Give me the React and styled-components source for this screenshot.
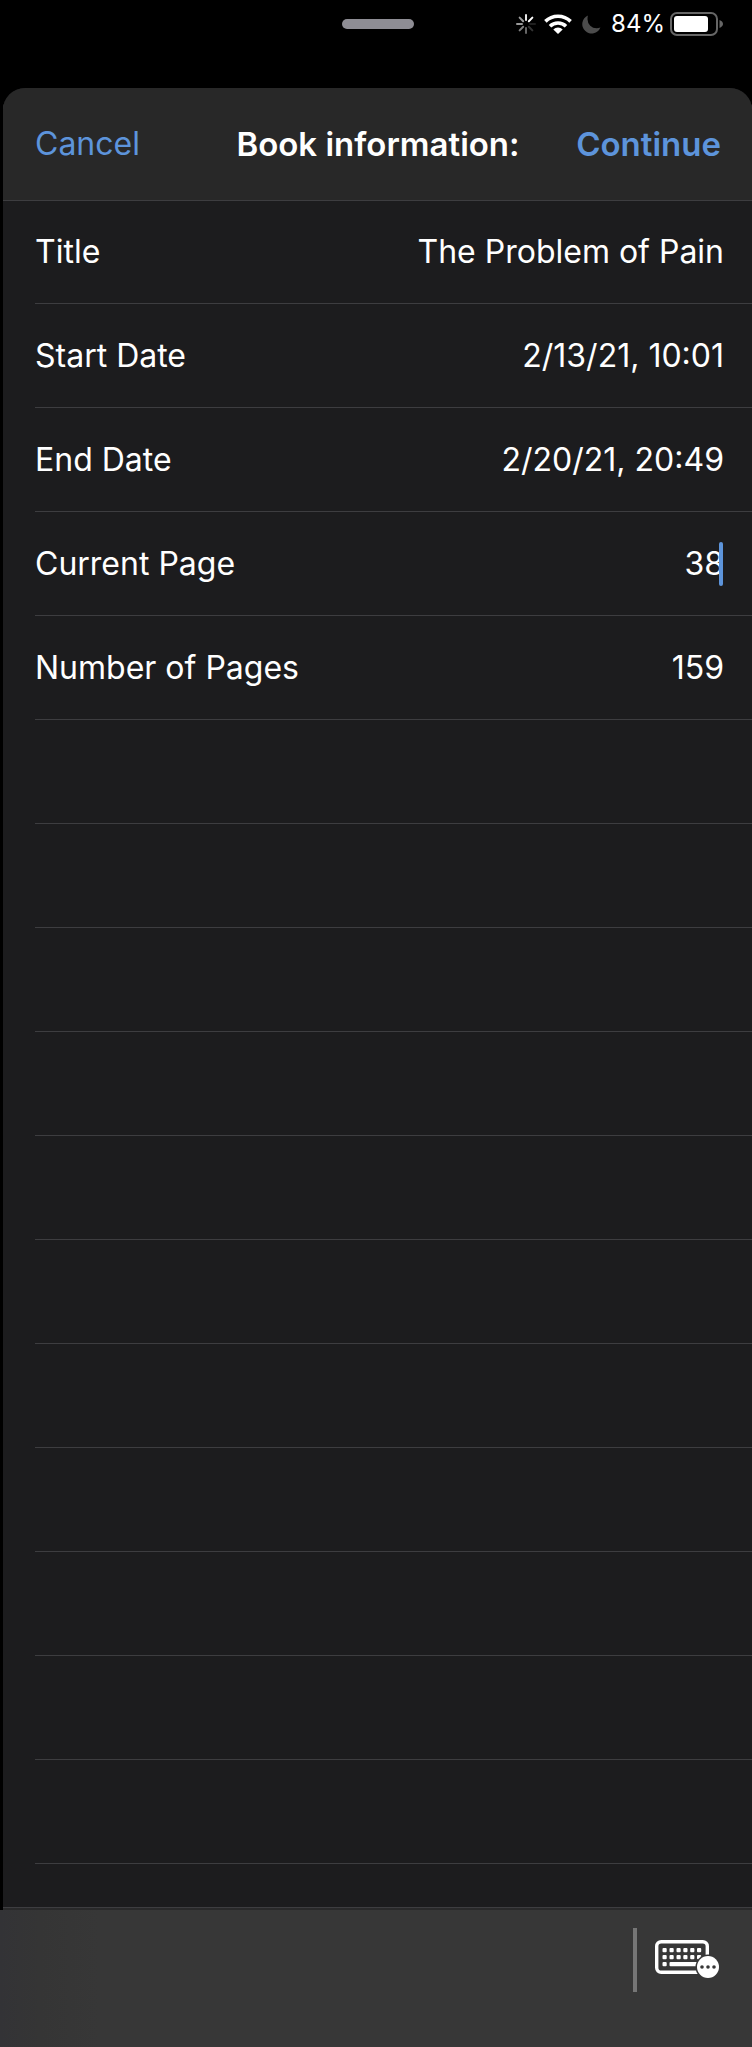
import React, { useState } from "react";
import styled, { createGlobalStyle } from "styled-components";

const GlobalStyle = createGlobalStyle`
  *, *::before, *::after { box-sizing: border-box; }
  body {
    margin: 0;
    background: #000;
    color: #fff;
    font-family: Inter, "Liberation Sans", sans-serif;
  }
  button, input { font: inherit; }
`;

const Screen = styled.div`
  display: flex;
  flex-direction: column;
  min-height: 100vh;
`;

const StatusBar = styled.div`
  display: grid;
  grid-template-columns: 1fr auto 1fr;
  align-items: center;
  height: 48px;
  margin-bottom: 40px;
  padding-left: 4px;
`;

const GrabHandle = styled.div`
  grid-column: 2;
  width: 72px;
  height: 10px;
  border-radius: 5px;
  background: #8e8d94;
`;

const Indicators = styled.div`
  display: flex;
  align-items: center;
  justify-content: flex-end;
  padding-right: 28px;

  svg { display: block; flex: none; }
`;

const Gap = styled.span`
  flex: none;
  width: ${({ $size }) => $size}px;
`;

const BatteryLevel = styled.span`
  font-size: 24px;
  line-height: 28px;
`;

const Sheet = styled.form`
  flex: 1;
  display: flex;
  flex-direction: column;
  margin: 0 0 0 3px;
  border-radius: 22px 22px 0 0;
  background: #1c1c1e;
  overflow: hidden;
`;

const Header = styled.header`
  display: grid;
  grid-template-columns: 1fr auto 1fr;
  align-items: center;
  height: 112px;
  padding: 0 31px 0 32px;
  background: #282828;
  box-shadow: 0 1px 0 #3d3d40;
`;

const Heading = styled.h1`
  margin: 0;
  font-size: 33px;
  font-weight: 600;
  line-height: 40px;
`;

const HeaderButton = styled.button`
  justify-self: ${({ $end }) => ($end ? "end" : "start")};
  padding: 0;
  border: 0;
  background: none;
  color: #5d94db;
  font-size: ${({ $end }) => ($end ? 33 : 32)}px;
  font-weight: ${({ $end }) => ($end ? 600 : 400)};
  line-height: 40px;
`;

const Rows = styled.div`
  flex: 1;
  display: flex;
  flex-direction: column;
  padding-left: 32px;
`;

const Row = styled.div`
  display: flex;
  align-items: center;
  height: 104px;
  padding-right: 28px;
  border-bottom: 1px solid #3d3d40;
`;

const PartialRow = styled.div`
  flex: 1;
  min-height: 43px;
`;

const Label = styled.label`
  flex: none;
  font-size: 32px;
  line-height: 40px;
`;

const Field = styled.div`
  position: relative;
  flex: 1;
  min-width: 0;
`;

const Input = styled.input`
  display: block;
  width: 100%;
  height: 44px;
  padding: 0;
  border: 0;
  outline: 0;
  background: none;
  color: #fff;
  caret-color: transparent;
  font-size: 32px;
  text-align: right;
`;

const Caret = styled.span`
  position: absolute;
  top: 0;
  right: 1px;
  width: 4px;
  height: 44px;
  border-radius: 2px;
  background: #5d94db;
`;

const SheetEdge = styled.div`
  height: 3px;
  border-top: 1px solid #3d3d40;
  background: #29292a;
`;

const KeyboardBar = styled.div`
  display: flex;
  align-items: flex-start;
  justify-content: flex-end;
  gap: 18px;
  height: 137px;
  padding: 18px 33px 0 0;
  background: linear-gradient(90deg, #333336 0, #353535 40px, #373737 100px);
`;

const Divider = styled.span`
  width: 4px;
  height: 64px;
  background: #767676;
`;

const KeyboardButton = styled.button`
  display: flex;
  padding: 12px 0;
  border: 0;
  background: none;
`;

const spokes = [
  [0, 0.9], [45, 1], [90, 0.12], [135, 0.2],
  [180, 0.4], [225, 0.5], [270, 0.6], [315, 0.62],
];

function SpinnerIcon() {
  return (
    <svg width="20" height="20" viewBox="0 0 20 20" aria-hidden="true">
      {spokes.map(([angle, opacity]) => (
        <path
          key={angle}
          d="M10 1v5"
          stroke="#fff"
          strokeWidth="2"
          strokeLinecap="round"
          opacity={opacity}
          transform={`rotate(${angle} 10 10)`}
        />
      ))}
    </svg>
  );
}

function WifiIcon() {
  return (
    <svg width="28" height="20" viewBox="0 0 28 20" aria-hidden="true">
      <g fill="none" stroke="#fff" strokeWidth="3.6">
        <path d="M1.4 7.4a18 18 0 0 1 25.2 0" />
        <path d="M6 12.2a11.6 11.6 0 0 1 16 0" />
      </g>
      <path d="M14 20l-4.7-4.6a6.8 6.8 0 0 1 9.4 0z" fill="#fff" />
    </svg>
  );
}

function MoonIcon() {
  return (
    <svg width="19" height="19" viewBox="0 0 19 19" aria-hidden="true">
      <path
        d="M5.9 0.5A9.4 9.4 0 1 0 18.4 12.6C17.2 13.1 15.9 13.3 14.7 13.3A9.1 9.1 0 0 1 5.5 4.3C5.5 3 5.6 1.7 5.9 0.5z"
        fill="#4c4c4c"
      />
    </svg>
  );
}

function BatteryIcon() {
  return (
    <svg width="54" height="24" viewBox="0 0 54 24" aria-hidden="true">
      <rect x="1" y="1" width="46" height="22" rx="6" fill="none" stroke="#666" strokeWidth="2" />
      <rect x="4" y="4" width="34" height="16" rx="3" fill="#fff" />
      <path d="M49.5 8c2 .8 3.5 2.2 3.5 4s-1.5 3.2-3.5 4z" fill="#666" />
    </svg>
  );
}

const keyColumns = [7.5, 14.5, 21.5, 28.3, 35.2, 42];

function KeyboardIcon() {
  return (
    <svg width="64" height="38" viewBox="0 0 64 38" aria-hidden="true">
      <rect x="1.7" y="1.7" width="50.6" height="30.6" rx="4.5" fill="none" stroke="#fff" strokeWidth="3.4" />
      <g fill="#fff">
        {[8, 15].map((y) =>
          keyColumns.map((x) => (
            <rect key={`${x}-${y}`} x={x} y={y} width="4.2" height="4.2" rx="1" />
          ))
        )}
        <rect x="7.5" y="22" width="4.2" height="4.2" rx="1" />
        <rect x="14.5" y="22" width="28" height="4.2" rx="1" />
      </g>
      <circle cx="53" cy="27" r="12.5" fill="#373737" />
      <circle cx="53" cy="27" r="11" fill="#fff" />
      <g fill="#373737">
        <circle cx="47" cy="27" r="1.8" />
        <circle cx="53" cy="27" r="1.8" />
        <circle cx="59" cy="27" r="1.8" />
      </g>
    </svg>
  );
}

const fields = [
  { id: "title", label: "Title", value: "The Problem of Pain" },
  { id: "start", label: "Start Date", value: "2/13/21, 10:01" },
  { id: "end", label: "End Date", value: "2/20/21, 20:49" },
  { id: "current", label: "Current Page", value: "38", active: true },
  { id: "pages", label: "Number of Pages", value: "159" },
];

const EMPTY_ROWS = 11;

function BookField({ id, label, value, active }) {
  const [text, setText] = useState(value);
  return (
    <Row>
      <Label htmlFor={id}>{label}</Label>
      <Field>
        <Input id={id} type="text" value={text} onChange={(e) => setText(e.target.value)} />
        {active && <Caret />}
      </Field>
    </Row>
  );
}

export default function App() {
  return (
    <Screen>
      <GlobalStyle />
      <StatusBar>
        <GrabHandle />
        <Indicators>
          <SpinnerIcon />
          <Gap $size={8} />
          <WifiIcon />
          <Gap $size={10} />
          <MoonIcon />
          <Gap $size={10} />
          <BatteryLevel>84%</BatteryLevel>
          <Gap $size={5} />
          <BatteryIcon />
        </Indicators>
      </StatusBar>
      <Sheet onSubmit={(e) => e.preventDefault()}>
        <Header>
          <HeaderButton type="button">Cancel</HeaderButton>
          <Heading>Book information:</Heading>
          <HeaderButton type="submit" $end>Continue</HeaderButton>
        </Header>
        <Rows>
          {fields.map((field) => (
            <BookField key={field.id} {...field} />
          ))}
          {Array.from({ length: EMPTY_ROWS }, (_, i) => (
            <Row key={i} />
          ))}
          <PartialRow />
        </Rows>
        <SheetEdge />
      </Sheet>
      <KeyboardBar>
        <Divider />
        <KeyboardButton type="button" aria-label="Keyboard options">
          <KeyboardIcon />
        </KeyboardButton>
      </KeyboardBar>
    </Screen>
  );
}
